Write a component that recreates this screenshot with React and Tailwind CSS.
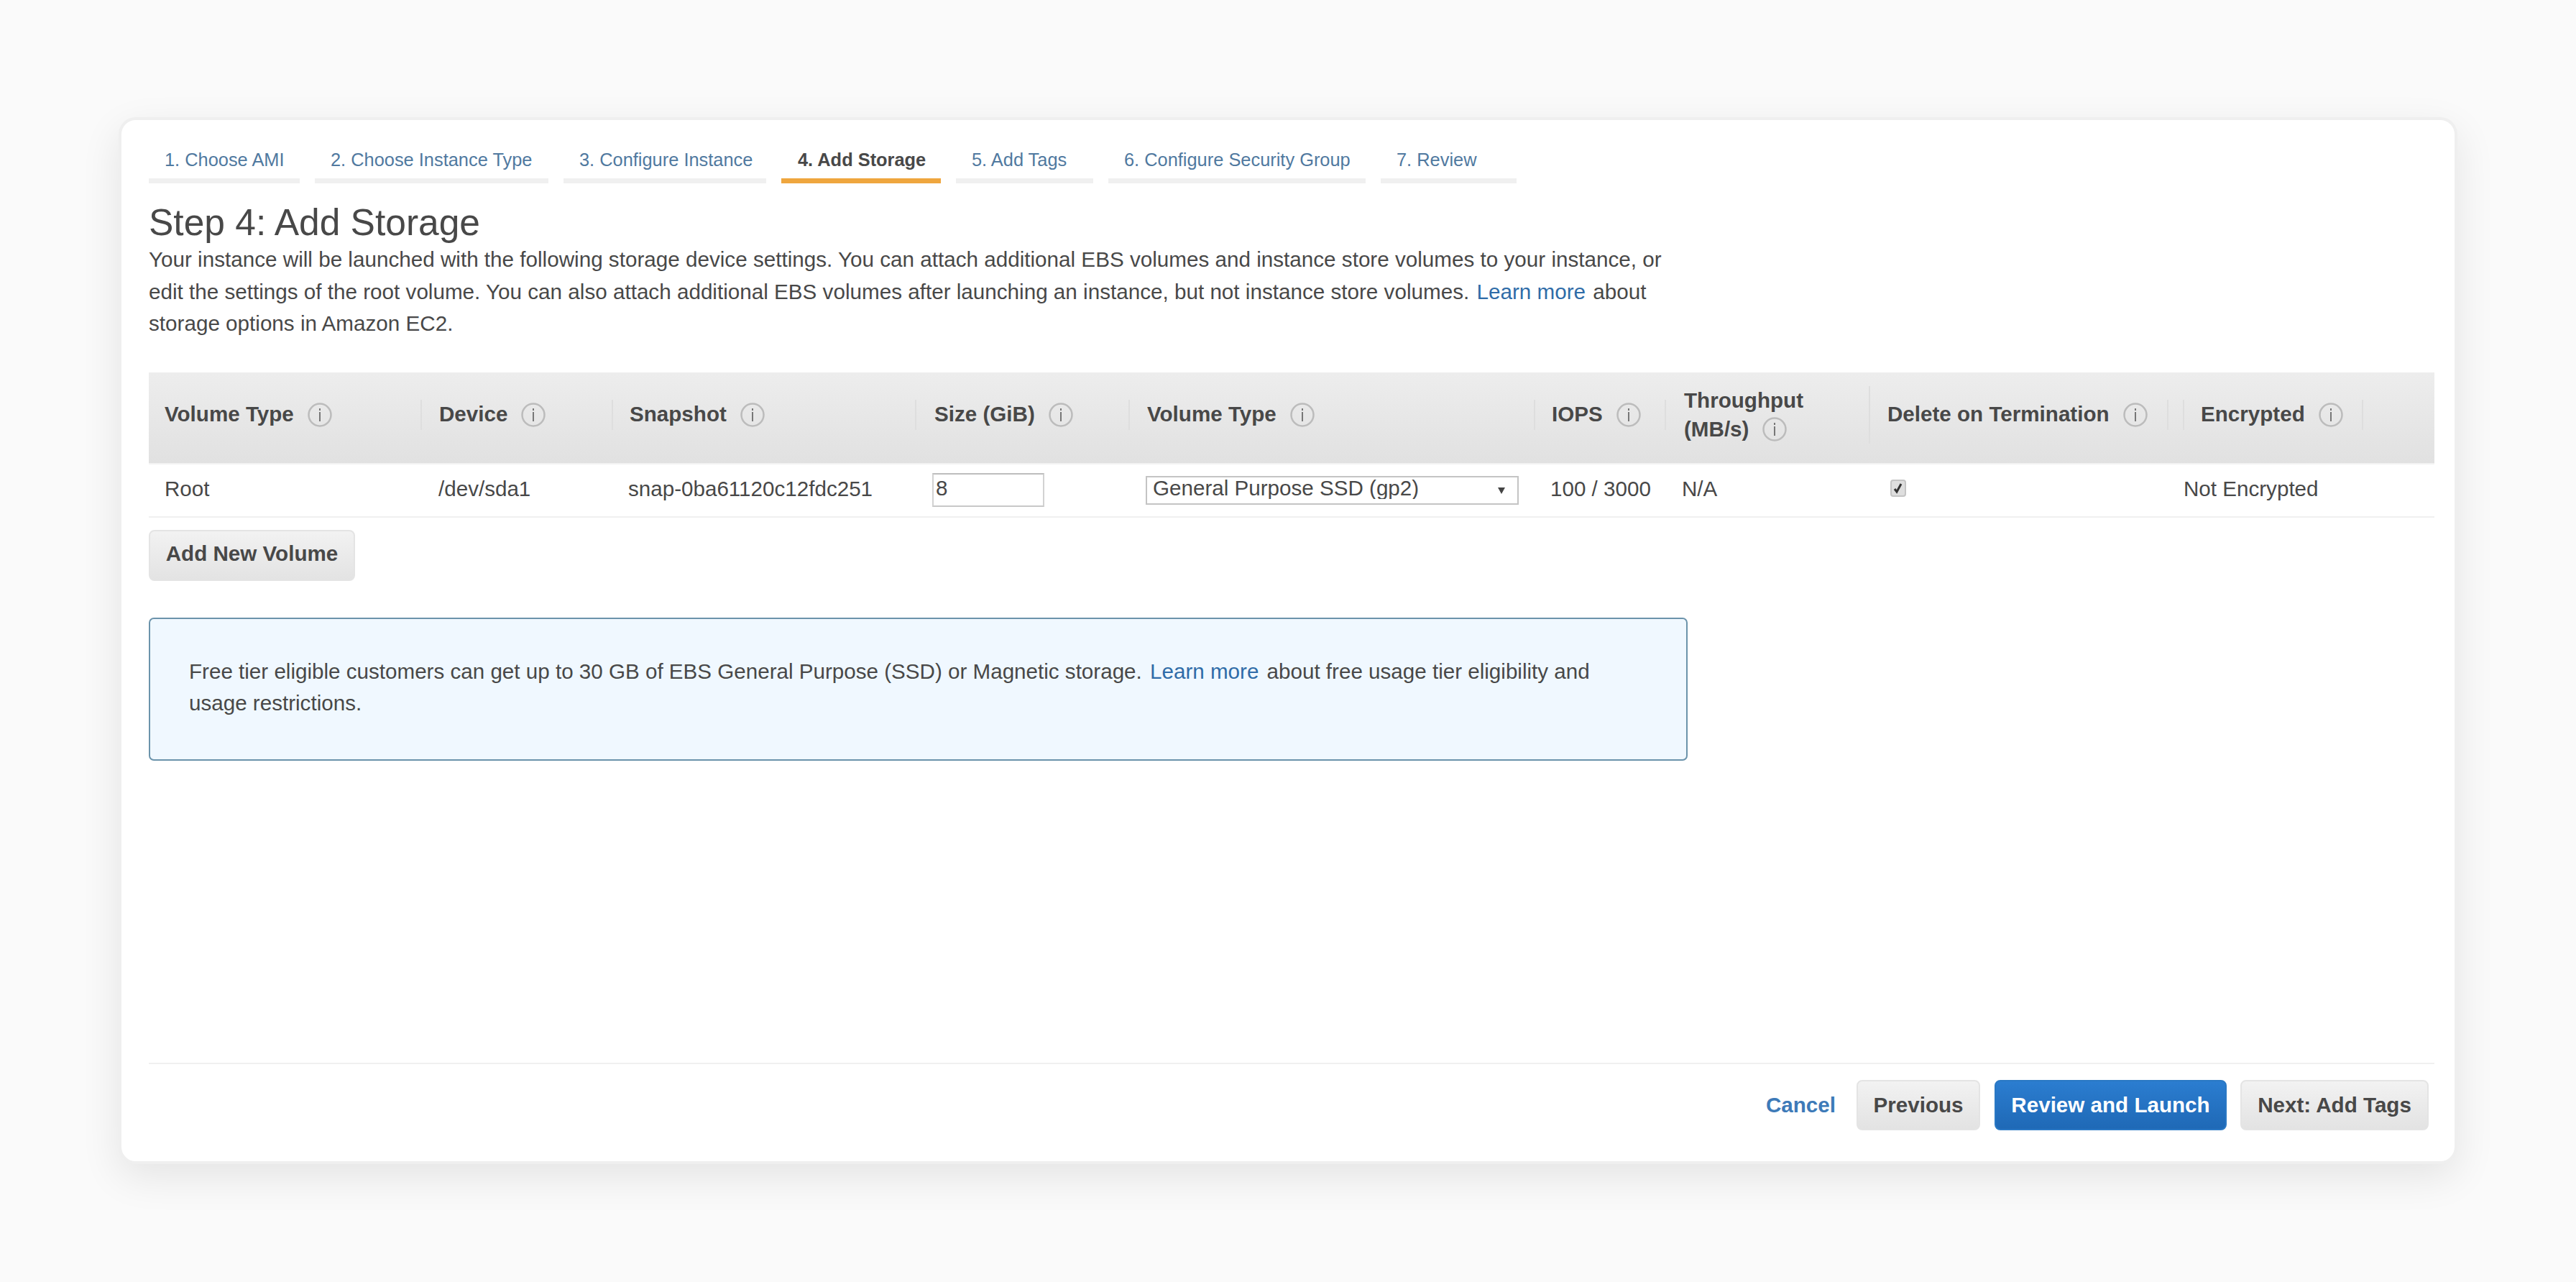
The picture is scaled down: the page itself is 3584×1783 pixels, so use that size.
import React from 'react';

const tabs = [
  { label: '1. Choose AMI', width: 'w-[210px]' },
  { label: '2. Choose Instance Type', width: 'w-[325px]' },
  { label: '3. Configure Instance', width: 'w-[282px]' },
  { label: '4. Add Storage', width: 'w-[222px]', active: true },
  { label: '5. Add Tags', width: 'w-[191px]' },
  { label: '6. Configure Security Group', width: 'w-[358px]' },
  { label: '7. Review', width: 'w-[189px]' },
];

const columns = 'grid grid-cols-[380px_266px_422px_297px_564px_182px_284px_415px_271px_99px]';

const InfoIcon = () => (
  <svg viewBox="0 0 36 36" className="w-[36px] h-[36px] shrink-0 ml-[18px]">
    <circle cx="18" cy="18" r="15.5" fill="none" stroke="#bcbcbc" strokeWidth="2.5" />
    <rect x="17" y="9" width="2" height="3" fill="#777" />
    <rect x="17" y="14" width="2" height="13" fill="#777" />
  </svg>
);

const HeaderCell = ({ label, className = '' }) => (
  <div className={`h-[42px] flex items-center border-r-2 border-[#dedede] ${className}`}>
    <span>{label}</span>
    <InfoIcon />
  </div>
);

const GrayButton = ({ children, className = '' }) => (
  <button
    type="button"
    className={`h-[70px] rounded-[8px] border-2 border-[#e4e4e4] bg-gradient-to-b from-[#f2f2f2] to-[#e3e3e3] font-bold text-[#484848] ${className}`}
  >
    {children}
  </button>
);

export default function App() {
  return (
    <div
      className="h-[1783px] bg-[#fafafa] pt-[163px] pl-[165px] text-[29.6px] text-[#484848]"
      style={{ fontFamily: '"Liberation Sans", Arial, sans-serif' }}
    >
      <div className="w-[3254px] h-[1456px] flex flex-col rounded-[24px] border-4 border-[#efefef] bg-white pt-[40px] pl-[38px] pr-[28px] pb-[43px] shadow-[0_18px_55px_rgba(0,0,0,0.09)]">
        {/* Wizard steps */}
        <div className="flex gap-[21px] text-[25.4px] leading-[30px]">
          {tabs.map((tab) => (
            <div
              key={tab.label}
              className={
                tab.active
                  ? `${tab.width} pl-[23px] pb-[11px] border-b-[7px] border-[#efa63e] font-bold text-[#484848]`
                  : `${tab.width} pl-[22px] pb-[11px] border-b-[7px] border-[#f0f0f0] text-[#50799f]`
              }
            >
              {tab.label}
            </div>
          ))}
        </div>

        <h1 className="mt-[24px] text-[51.5px] leading-[60px] font-normal">Step 4: Add Storage</h1>
        <p className="w-[2140px] text-[29.65px] leading-[44.5px]">
          Your instance will be launched with the following storage device settings. You can attach additional EBS
          volumes and instance store volumes to your instance, or edit the settings of the root volume. You can also
          attach additional EBS volumes after launching an instance, but not instance store volumes.{' '}
          <a className="mx-[2px] text-[#2f6ca8]">Learn more</a> about storage options in Amazon EC2.
        </p>

        {/* Volume table */}
        <div className={`${columns} mt-[45px] h-[128px] pb-[8px] items-center border-b-2 border-[#f3f3f3] bg-gradient-to-b from-[#ededed] to-[#e1e1e1] font-bold`}>
          <HeaderCell label="Volume Type" className="pl-[22px]" />
          <HeaderCell label="Device" className="pl-[24px]" />
          <HeaderCell label="Snapshot" className="pl-[23px]" />
          <HeaderCell label="Size (GiB)" className="pl-[25px]" />
          <HeaderCell label="Volume Type" className="pl-[24px]" />
          <HeaderCell label="IOPS" className="pl-[23px]" />
          <div className="h-[80px] pl-[25px] leading-[40px] border-r-2 border-[#dedede]">
            Throughput
            <div className="flex items-center">
              (MB/s)
              <InfoIcon />
            </div>
          </div>
          <HeaderCell label="Delete on Termination" className="pl-[24px]" />
          <div className="ml-[20px] border-l-2 border-[#dedede]">
            <HeaderCell label="Encrypted" className="pl-[23px]" />
          </div>
        </div>

        <div className={`${columns} h-[74px] items-center border-b-2 border-[#f0f0f0]`}>
          <div className="pl-[22px] pb-[2px]">Root</div>
          <div className="pl-[23px] pb-[2px]">/dev/sda1</div>
          <div className="pl-[21px] pb-[2px]">snap-0ba61120c12fdc251</div>
          <div className="pl-[22px]">
            <input
              type="text"
              defaultValue="8"
              className="block w-[156px] h-[47px] border-2 border-t-[#bdbdbd] border-x-[#d2d2d2] border-b-[#c8c8c8] pl-[3px] pb-[6px] outline-none"
            />
          </div>
          <div className="pl-[22px]">
            <div className="relative w-[519px]">
              <select className="block w-full h-[40px] appearance-none rounded-none border-2 border-[#c4c4c4] bg-white pl-[8px] pb-[5px] leading-[30px] outline-none">
                <option>General Purpose SSD (gp2)</option>
              </select>
              <svg viewBox="0 0 12 12" className="absolute right-[18px] top-[14px] w-[12px] h-[12px]">
                <path d="M1 2h10L6 11z" fill="#444" />
              </svg>
            </div>
          </div>
          <div className="pl-[21px] pb-[2px]">100 / 3000</div>
          <div className="pl-[22px] pb-[2px]">N/A</div>
          <div className="pl-[28px]">
            <span className="block w-[22px] h-[24px] -mt-[6px] rounded-[4px] border-2 border-[#c4c4c4] bg-[#dedede]">
              <svg viewBox="0 0 18 20" className="w-[18px] h-[20px]">
                <path d="M4 11l3 4 6-11" fill="none" stroke="#333" strokeWidth="3" />
              </svg>
            </span>
          </div>
          <div className="pl-[21px] pb-[2px]">Not Encrypted</div>
        </div>

        <GrayButton className="mt-[17px] w-[287px] h-[71px] pb-[3px]">Add New Volume</GrayButton>

        {/* Free tier notice */}
        <div className="mt-[51px] w-[2141px] h-[199px] flex items-center rounded-[7px] border-2 border-[#6b93ab] bg-[#f0f8ff] pl-[54px] pr-[72px] pb-[4px]">
          <p className="text-[29.6px] leading-[44px]">
            Free tier eligible customers can get up to 30 GB of EBS General Purpose (SSD) or Magnetic storage.{' '}
            <a className="mx-[3px] text-[#2f6ca8]">Learn more</a> about free usage tier eligibility and usage restrictions.
          </p>
        </div>

        {/* Footer */}
        <div className="mt-auto flex items-center justify-end border-t-2 border-[#f0f0f0] pt-[22px] pr-[8px]">
          <a className="font-bold text-[#3d7ab8] mr-[29px]">Cancel</a>
          <GrayButton className="w-[172px]">Previous</GrayButton>
          <button
            type="button"
            className="ml-[20px] w-[323px] h-[70px] rounded-[8px] border-2 border-[#2a78c4] bg-gradient-to-b from-[#2b7dd0] to-[#1f69b6] font-bold text-white"
          >
            Review and Launch
          </button>
          <GrayButton className="ml-[19px] w-[262px]">Next: Add Tags</GrayButton>
        </div>
      </div>
    </div>
  );
}
